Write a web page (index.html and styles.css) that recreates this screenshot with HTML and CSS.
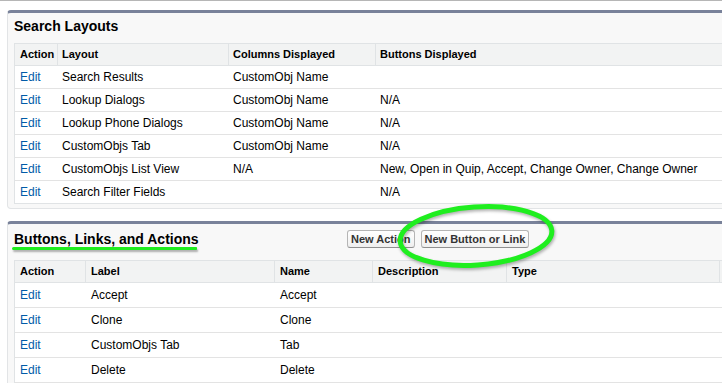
FILE: index.html
```html
<!DOCTYPE html>
<html>
<head>
<meta charset="utf-8">
<link rel="stylesheet" href="styles.css">
</head>
<body>
<div class="toprule"></div>

<section class="panel panel-search">
  <h2 class="panel-title">Search Layouts</h2>
  <div class="tbl tbl-search">
    <div class="row head">
      <div class="c">Action</div><div class="c">Layout</div><div class="c">Columns Displayed</div><div class="c">Buttons Displayed</div>
    </div>
    <div class="row"><div class="c"><a class="edit" href="#">Edit</a></div><div class="c">Search Results</div><div class="c">CustomObj Name</div><div class="c"></div></div>
    <div class="row"><div class="c"><a class="edit" href="#">Edit</a></div><div class="c">Lookup Dialogs</div><div class="c">CustomObj Name</div><div class="c">N/A</div></div>
    <div class="row"><div class="c"><a class="edit" href="#">Edit</a></div><div class="c">Lookup Phone Dialogs</div><div class="c">CustomObj Name</div><div class="c">N/A</div></div>
    <div class="row"><div class="c"><a class="edit" href="#">Edit</a></div><div class="c">CustomObjs Tab</div><div class="c">CustomObj Name</div><div class="c">N/A</div></div>
    <div class="row"><div class="c"><a class="edit" href="#">Edit</a></div><div class="c">CustomObjs List View</div><div class="c">N/A</div><div class="c">New, Open in Quip, Accept, Change Owner, Change Owner</div></div>
    <div class="row last"><div class="c"><a class="edit" href="#">Edit</a></div><div class="c">Search Filter Fields</div><div class="c"></div><div class="c">N/A</div></div>
  </div>
</section>

<section class="panel panel-buttons">
  <div class="panel-head">
    <h2 class="panel-title marked">Buttons, Links, and Actions</h2>
    <div class="btns">
      <button class="btn" type="button">New Action</button>
      <button class="btn" type="button">New Button or Link</button>
    </div>
  </div>
  <div class="tbl tbl-buttons">
    <div class="row head">
      <div class="c">Action</div><div class="c">Label</div><div class="c">Name</div><div class="c">Description</div><div class="c">Type</div><div class="c"></div>
    </div>
    <div class="row"><div class="c"><a class="edit" href="#">Edit</a></div><div class="c">Accept</div><div class="c">Accept</div><div class="c"></div><div class="c"></div><div class="c"></div></div>
    <div class="row"><div class="c"><a class="edit" href="#">Edit</a></div><div class="c">Clone</div><div class="c">Clone</div><div class="c"></div><div class="c"></div><div class="c"></div></div>
    <div class="row"><div class="c"><a class="edit" href="#">Edit</a></div><div class="c">CustomObjs Tab</div><div class="c">Tab</div><div class="c"></div><div class="c"></div><div class="c"></div></div>
    <div class="row"><div class="c"><a class="edit" href="#">Edit</a></div><div class="c">Delete</div><div class="c">Delete</div><div class="c"></div><div class="c"></div><div class="c"></div></div>
  </div>
</section>

<svg class="circle-mark" width="180" height="80" viewBox="0 0 180 80" aria-hidden="true">
  <ellipse cx="86" cy="37" rx="76" ry="29" transform="rotate(-4 86 37)" fill="none" stroke="#1fee1f" stroke-width="5"/>
</svg>
</body>
</html>
```

FILE: styles.css
```css
html, body {
  margin: 0;
  padding: 0;
  background: #fff;
  overflow: hidden;
}
body {
  position: relative;
  font-family: "Liberation Sans", Arial, sans-serif;
  font-size: 12px;
  color: #000;
  width: 722px;
  height: 383px;
}
.toprule {
  height: 1px;
  background: #b6b6b6;
}
.panel {
  margin-left: 7px;
  width: 760px;
  background: #f8f8f8;
  border: 1px solid #e2e4e6;
  border-top: 3px solid #79829a;
  border-radius: 4px;
}
.panel-search {
  margin-top: 9px;
  padding-bottom: 4px;
}
.panel-buttons {
  margin-top: 12px;
  padding-bottom: 10px;
}
.panel-title {
  margin: 0;
  font-size: 14px;
  font-weight: bold;
  line-height: 17px;
  color: #000;
}
.panel-search .panel-title {
  padding: 5px 0 0 6px;
  margin-bottom: 8px;
}
.panel-head {
  display: flex;
  align-items: center;
  padding: 6px 0 0 6px;
  height: 18px;
  margin-bottom: 12px;
}
.panel-head .panel-title {
  width: 333px;
  flex: none;
}
.marked {
  position: relative;
}
.marked::after {
  content: "";
  position: absolute;
  left: -2px;
  top: 16px;
  width: 185px;
  height: 3px;
  border-radius: 2px 1px 1px 2px;
  background: #1fee1f;
  box-shadow: 1px 2px 2px rgba(0, 0, 0, 0.3);
}
.btns {
  display: flex;
  gap: 6px;
}
.btn {
  font-family: "Liberation Sans", Arial, sans-serif;
  font-size: 11px;
  font-weight: bold;
  line-height: 14px;
  color: #333;
  padding: 1px 3px;
  margin: 0;
  border: 1px solid #b5b5b5;
  border-bottom-color: #8f8f8f;
  border-radius: 3px;
  background: linear-gradient(#ffffff, #efefef);
}
.tbl {
  margin: 0 6px;
  background: #fff;
  border: 1px solid #e0e3e5;
}
.row {
  display: grid;
  border-bottom: 1px solid #e3e3e3;
  line-height: 22px;
}
.row.last {
  border-bottom: none;
}
.row.head {
  background: #f2f3f3;
  border-bottom: 1px solid #e0e3e5;
  line-height: 21px;
  font-size: 11px;
  font-weight: bold;
}
.tbl-search .row {
  grid-template-columns: 42px 171px 147px 1fr;
}
.tbl-buttons .row {
  grid-template-columns: 70px 189px 98px 134px 213px 1fr;
  line-height: 24px;
}
.tbl-buttons .row.head {
  line-height: 21px;
}
.c {
  white-space: nowrap;
  overflow: hidden;
  padding-left: 5px;
}
.c + .c {
  border-left: 1px solid transparent;
}
.tbl-search .c + .c {
  padding-left: 4px;
}
.head .c + .c {
  border-left-color: #e0e3e5;
}
.edit {
  color: #015ba7;
  text-decoration: none;
}
.circle-mark {
  position: absolute;
  left: 390px;
  top: 199px;
  overflow: visible;
  filter: drop-shadow(1px 2px 1.5px rgba(0, 0, 0, 0.3));
}
```
